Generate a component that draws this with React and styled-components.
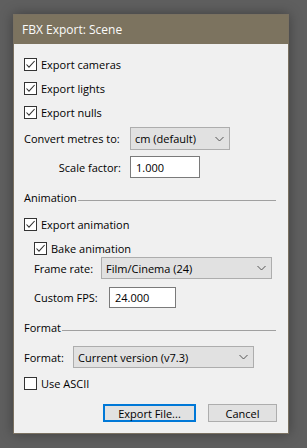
import React from "react"
import styled, { createGlobalStyle } from "styled-components"


const GlobalStyle = createGlobalStyle`
    html, body
    {
        margin: 0;
        padding: 0;
        background: #5f5f5f;
    }

    body
    {
        width: 307px;
        height: 448px;
        overflow: hidden;
        font-family: "Open Sans", "Noto Sans", sans-serif;
        font-size: 11px;
        color: #000;
    }
`


const Check = ({ checked }) =>
{
    return(
        <Box>
            {checked &&
                <svg width="11" height="11" viewBox="0 0 11 11">
                    <polyline points="1.5,5.5 4,8.2 9.6,2" fill="none" stroke="#333" strokeWidth="1.1" />
                </svg>
            }
        </Box>
    )
}


const Chevron = () =>
{
    return(
        <svg width="9" height="6" viewBox="0 0 9 6">
            <polyline points="0.5,1 4.5,5 8.5,1" fill="none" stroke="#555" strokeWidth="1" />
        </svg>
    )
}


const App = () =>
{
    return(
        <>
            <GlobalStyle />
            <Window>
                <TitleBar>FBX Export: Scene</TitleBar>

                <Body>
                    <CheckRow $mt={11}><Check checked />Export cameras</CheckRow>
                    <CheckRow $mt={6}><Check checked />Export lights</CheckRow>
                    <CheckRow $mt={6}><Check checked />Export nulls</CheckRow>

                    <FieldRow $mt={6}>
                        <Label $w={106}>Convert metres to:</Label>
                        <Select $w={100} $h={23}>
                            <span>cm (default)</span>
                            <Chevron />
                        </Select>
                    </FieldRow>

                    <FieldRow $mt={6}>
                        <Label $w={106} $right>Scale factor:</Label>
                        <TextInput $w={70} $h={22} defaultValue="1.000" />
                    </FieldRow>

                    <SectionHeader $mt={10}>
                        <span>Animation</span>
                        <Rule />
                    </SectionHeader>

                    <CheckRow $mt={9}><Check checked />Export animation</CheckRow>
                    <CheckRow $mt={6} $indent={10}><Check checked />Bake animation</CheckRow>

                    <FieldRow $mt={0} $indent={10}>
                        <Label $w={67}>Frame rate:</Label>
                        <Select $w={171} $h={22}>
                            <span>Film/Cinema (24)</span>
                            <Chevron />
                        </Select>
                    </FieldRow>

                    <FieldRow $mt={8} $indent={10}>
                        <Label $w={75}>Custom FPS:</Label>
                        <TextInput $w={67} $h={21} defaultValue="24.000" />
                    </FieldRow>

                    <SectionHeader $mt={10}>
                        <span>Format</span>
                        <Rule />
                    </SectionHeader>

                    <FieldRow $mt={10}>
                        <Label $w={49}>Format:</Label>
                        <Select $w={181} $h={22}>
                            <span>Current version (v7.3)</span>
                            <Chevron />
                        </Select>
                    </FieldRow>

                    <CheckRow $mt={6}><Check />Use ASCII</CheckRow>

                    <Footer>
                        <Button $w={93} $primary>Export File...</Button>
                        <Button $w={69}>Cancel</Button>
                    </Footer>
                </Body>
            </Window>
        </>
    )
}


const Window = styled.div`

    margin: 14px 0 0 13px;
    width: 276px;
    height: 420px;
    box-sizing: border-box;
    border: 1px solid #7a7161;
    background: #f0f0f0;
    box-shadow: 0 0 12px rgba(0, 0, 0, 0.35);
    display: flex;
    flex-direction: column;
`

const TitleBar = styled.div`

    height: 29px;
    flex-shrink: 0;
    display: flex;
    align-items: center;
    padding-left: 8px;
    background: #7c735f;
    color: #fbfbfb;
    font-size: 12px;
`

const Body = styled.div`

    display: flex;
    flex-direction: column;
    padding: 0 12px 0 10px;
`

const CheckRow = styled.label`

    display: flex;
    align-items: center;
    gap: 4px;
    height: 18px;
    margin-top: ${p => p.$mt}px;
    padding-left: ${p => p.$indent || 0}px;
`

const Box = styled.span`

    width: 13px;
    height: 13px;
    box-sizing: border-box;
    border: 1px solid #333;
    background: #fff;
    display: flex;
    align-items: center;
    justify-content: center;
`

const FieldRow = styled.div`

    display: flex;
    align-items: center;
    margin-top: ${p => p.$mt}px;
    padding-left: ${p => p.$indent || 0}px;
`

const Label = styled.span`

    width: ${p => p.$w}px;
    flex-shrink: 0;
    box-sizing: border-box;
    text-align: ${p => p.$right ? "right" : "left"};
    padding-right: ${p => p.$right ? 9 : 0}px;
    white-space: nowrap;
`

const Select = styled.div`

    width: ${p => p.$w}px;
    height: ${p => p.$h}px;
    box-sizing: border-box;
    border: 1px solid #adadad;
    background: #e1e1e1;
    display: flex;
    align-items: center;
    justify-content: space-between;
    padding: 0 5px 0 4px;
`

const TextInput = styled.input`

    width: ${p => p.$w}px;
    height: ${p => p.$h}px;
    box-sizing: border-box;
    border: 1px solid #7a7a7a;
    background: #fff;
    padding: 0 5px;
    margin: 0;
    font: inherit;
    color: #000;
    outline: none;
`

const SectionHeader = styled.div`

    display: flex;
    align-items: center;
    height: 18px;
    margin-top: ${p => p.$mt}px;
`

const Rule = styled.div`

    flex: 1;
    height: 1px;
    margin: 6px 0 0 1px;
    background: #a0a0a0;
`

const Footer = styled.div`

    display: flex;
    justify-content: flex-end;
    gap: 12px;
    margin: 12px -1px 0 0;
`

const Button = styled.button`

    width: ${p => p.$w}px;
    height: 18px;
    box-sizing: border-box;
    padding: 0;
    margin: 0;
    font: inherit;
    color: #000;
    background: #e1e1e1;
    border: ${p => p.$primary ? "2px solid #0078d7" : "1px solid #adadad"};
    border-radius: 0;
`


export default App;
